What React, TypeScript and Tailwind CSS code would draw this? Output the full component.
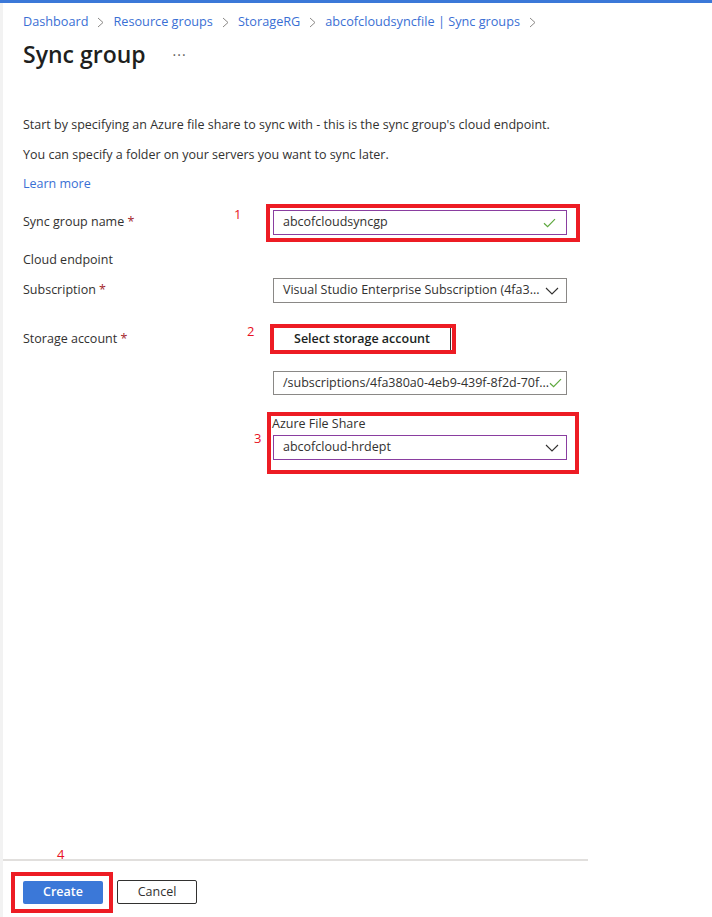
import React from "react";

const font = { fontFamily: '"Open Sans", "Noto Sans", sans-serif' };

function Check() {
  return (
    <svg width="13" height="10" viewBox="0 0 13 10" className="shrink-0">
      <path d="M1 5.2 L4.6 8.6 L12 1.2" fill="none" stroke="#5ea83e" strokeWidth="1.2" />
    </svg>
  );
}

function Chevron() {
  return (
    <svg width="14" height="8" viewBox="0 0 14 8" className="shrink-0">
      <path d="M1 1 L7 7 L13 1" fill="none" stroke="#323130" strokeWidth="1.1" />
    </svg>
  );
}

function Crumb({ children }: { children: React.ReactNode }) {
  return <span className="text-[#3a6fd4]">{children}</span>;
}

function Sep() {
  return (
    <svg width="7" height="11" viewBox="0 0 7 11" className="mx-[9px]">
      <path d="M1 1 L6 5.5 L1 10" fill="none" stroke="#8a8886" strokeWidth="1" />
    </svg>
  );
}

function Label({ text }: { text: string }) {
  return (
    <span>
      {text}
      <span className="text-[#a4262c]">{"\u00a0*"}</span>
    </span>
  );
}

export default function App() {
  return (
    <div className="w-[712px] h-[917px] bg-white flex flex-col text-[12.5px] text-[#323130] overflow-hidden" style={font}>
      <div className="h-[3px] bg-[#3b78d8] shrink-0" />
      <div className="flex flex-1 min-h-0">
        <div className="w-[3px] bg-[#f2f2f2] shrink-0" />
        <div className="w-[585px] flex flex-col">
          {/* breadcrumb */}
          <div className="flex items-center pl-[20px] h-[38px] text-[12.7px]">
            <Crumb>Dashboard</Crumb>
            <Sep />
            <Crumb>Resource groups</Crumb>
            <Sep />
            <Crumb>StorageRG</Crumb>
            <Sep />
            <Crumb>abcofcloudsyncfile | Sync groups</Crumb>
            <Sep />
          </div>
          <div className="flex items-center pl-[20px] h-[26px]">
            <h1 className="text-[23px] font-semibold text-[#201f1e] leading-none">Sync group</h1>
            <span className="ml-[27px] text-[14px] text-[#605e5c] -mt-[8px] tracking-[1px]">...</span>
          </div>

          <div className="pl-[20px] mt-[43px] flex flex-col">
            <p className="h-[30px] leading-[30px]">Start by specifying an Azure file share to sync with - this is the sync group's cloud endpoint.</p>
            <p className="h-[30px] leading-[30px]">You can specify a folder on your servers you want to sync later.</p>
            <p className="h-[28px] leading-[28px] text-[#3a6fd4]">Learn more</p>

            {/* Row 1 */}
            <div className="flex items-center mt-[12px] h-[25px]">
              <div className="w-[250px] relative h-full flex items-center">
                <Label text="Sync group name" />
                <span className="absolute left-[211px] -top-[5px] text-[#e81123] text-[13px]">1</span>
              </div>
              <div className="relative w-[294px]">
                <div className="absolute -left-[7px] -top-[6px] w-[314px] h-[38px] border-[4px] border-[#ed1c24]" />
                <div className="h-[25px] border border-[#8a3ea0] flex items-center pl-[9px] pr-[10px] justify-between">
                  <span>abcofcloudsyncgp</span>
                  <Check />
                </div>
              </div>
            </div>

            <div className="h-[26px] mt-[12px] flex items-center">Cloud endpoint</div>

            {/* Subscription */}
            <div className="flex items-center mt-[5px] h-[25px]">
              <div className="w-[250px]">
                <Label text="Subscription" />
              </div>
              <div className="w-[294px] h-[25px] border border-[#8a8886] flex items-center justify-between pl-[9px] pr-[7px]">
                <span className="whitespace-nowrap">Visual Studio Enterprise Subscription (4fa3...</span>
                <Chevron />
              </div>
            </div>

            {/* Storage account */}
            <div className="flex items-center mt-[24px] h-[24px]">
              <div className="w-[250px] relative h-full flex items-center">
                <Label text="Storage account" />
                <span className="absolute left-[224px] -top-[5px] text-[#e81123] text-[13px]">2</span>
              </div>
              <div className="relative">
                <div className="absolute -left-[3px] -top-[3px] w-[186px] h-[30px] border-[4px] border-[#ed1c24] z-10" />
                <button className="w-[178px] h-[24px] border border-[#323130] font-semibold text-[12.5px] text-[#201f1e] flex items-center justify-center">
                  Select storage account
                </button>
              </div>
            </div>

            <div className="flex mt-[20px]">
              <div className="w-[250px]" />
              <div className="w-[294px] h-[24px] border border-[#8a8886] flex items-center justify-between pl-[9px] pr-[8px]">
                <span className="whitespace-nowrap">/subscriptions/4fa380a0-4eb9-439f-8f2d-70f...</span>
                <Check />
              </div>
            </div>

            {/* Azure File Share */}
            <div className="flex mt-[19px]">
              <div className="w-[250px] relative">
                <span className="absolute left-[231px] top-[15px] text-[#e81123] text-[13px]">3</span>
              </div>
              <div className="relative w-[294px] flex flex-col">
                <div className="absolute -left-[6px] -top-[2px] w-[312px] h-[62px] border-[4px] border-[#ed1c24]" />
                <div className="h-[19px] leading-[19px] text-[12.5px] -ml-[1px]">Azure File Share</div>
                <div className="h-[25px] mt-[2px] border border-[#8a3ea0] flex items-center justify-between pl-[9px] pr-[7px]">
                  <span>abcofcloud-hrdept</span>
                  <Chevron />
                </div>
              </div>
            </div>
          </div>

          <div className="flex-1" />
          {/* footer */}
          <div className="relative border-t-2 border-[#e1dfdd] h-[58px] pl-[20px] pt-[6px] flex items-center gap-[14px] shrink-0">
            <span className="absolute left-[54px] -top-[16px] text-[#e81123] text-[13px]">4</span>
            <div className="relative">
              <div className="absolute -left-[12px] -top-[9px] w-[102px] h-[41px] border-[4px] border-[#ed1c24]" />
              <button className="w-[80px] h-[23px] bg-[#3b78d8] text-white font-semibold text-[12.5px] rounded-[2px] flex items-center justify-center">
                Create
              </button>
            </div>
            <button className="w-[80px] h-[24px] border border-[#323130] rounded-[2px] text-[12.5px] flex items-center justify-center">
              Cancel
            </button>
          </div>
        </div>
      </div>
    </div>
  );
}
